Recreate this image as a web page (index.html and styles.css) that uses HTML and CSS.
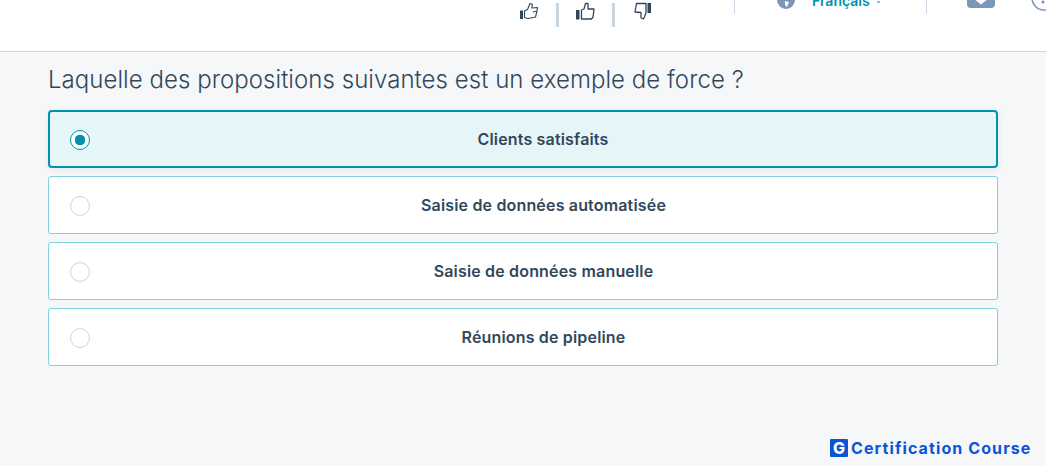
FILE: index.html
```html
<!DOCTYPE html>
<html lang="fr">
<head>
<meta charset="utf-8">
<title>Quiz</title>
<link rel="stylesheet" href="styles.css">
</head>
<body>
<header class="topbar">
  <svg class="thumb" viewBox="0 0 20 18" width="20" height="18"><rect x="1" y="8.5" width="3" height="8.5" fill="#33475b"/><path d="M5.5 9 L8.5 7.5 L11 1.5 L13.5 2.5 L12.8 6 L18.5 5.5 L18 9 L16.5 15 L9 16.5 L5.5 15.5 Z M14 10 L18 9" fill="none" stroke="#33475b" stroke-width="1.1" stroke-linejoin="round"/></svg>
  <span class="rate-sep"></span>
  <svg class="thumb" viewBox="0 0 20 18" width="20" height="18"><rect x="1" y="8" width="3.5" height="9.5" fill="#33475b"/><path d="M6.5 8 L9 7 L10.5 1.5 L13 1.5 L13 7 L19 7 L18 15 L16.5 17 L6.5 17 Z" fill="none" stroke="#33475b" stroke-width="1.3" stroke-linejoin="round"/></svg>
  <span class="rate-sep rate-sep-b"></span>
  <svg class="thumb thumb-down" viewBox="0 0 20 18" width="20" height="18"><rect x="14.5" y="1" width="3.5" height="10" fill="#33475b"/><path d="M13 1.5 L3.5 1.5 L2 10 L8 10.5 L8 16 L10.5 17 L13 11 Z" fill="none" stroke="#33475b" stroke-width="1.3" stroke-linejoin="round"/></svg>
  <span class="nav-sep nav-sep-a"></span>
  <svg class="globe" viewBox="0 0 18 18" width="18" height="18"><circle cx="9" cy="9" r="9" fill="#7c98b6"/><path d="M8 10 L12 11 L10 16 L8 14 Z M12 3 L16 6 L13 8 Z" fill="#fff"/></svg>
  <span class="lang">Français</span>
  <span class="caret"></span>
  <span class="nav-sep nav-sep-b"></span>
  <svg class="mail" viewBox="0 0 28 18" width="28" height="18"><rect width="28" height="18" rx="4" fill="#7c98b6"/><path d="M8.5 10 L14 14.5 L19.5 10 Z" fill="#fff"/></svg>
  <svg class="help" viewBox="0 0 26 26" width="26" height="26"><circle cx="13" cy="13" r="12" fill="none" stroke="#7c98b6" stroke-width="1.6"/><circle cx="12" cy="17" r="1.6" fill="#7c98b6"/></svg>
</header>
<main class="quiz">
  <h1 class="question">Laquelle des propositions suivantes est un exemple de force ?</h1>
  <ul class="options">
    <li class="option option-selected"><span class="radio radio-on"></span><span class="label">Clients satisfaits</span></li>
    <li class="option"><span class="radio"></span><span class="label">Saisie de données automatisée</span></li>
    <li class="option"><span class="radio"></span><span class="label">Saisie de données manuelle</span></li>
    <li class="option"><span class="radio"></span><span class="label">Réunions de pipeline</span></li>
  </ul>
</main>
<div class="brand">
  <span class="brand-mark">G</span>
  <span class="brand-text">Certification Course</span>
</div>
</body>
</html>
```
FILE: styles.css
```css
* { box-sizing: border-box; }
html, body { margin: 0; padding: 0; }
body {
  width: 1046px;
  height: 466px;
  overflow: hidden;
  position: relative;
  background: #f5f7f9;
  font-family: "Inter", "Liberation Sans", sans-serif;
  color: #33475b;
}
.topbar {
  display: flex;
  align-items: flex-start;
  height: 52px;
  padding-left: 519px;
  background: #fff;
  border-bottom: 1px solid #cbd6e2;
  overflow: hidden;
}
.thumb { flex: none; margin-top: 2px; }
.rate-sep {
  flex: none;
  width: 3px;
  height: 24px;
  margin: 3px 16px 0 17px;
  background: #cbd6e2;
}
.rate-sep-b { margin-right: 18px; }
.nav-sep {
  flex: none;
  width: 1px;
  height: 14px;
  background: #cbd6e2;
}
.nav-sep-a { margin-left: 81px; }
.nav-sep-b { margin-left: 46px; }
.globe { flex: none; margin: -9px 0 0 42px; }
.lang {
  flex: none;
  width: 60px;
  margin: -8px 0 0 17px;
  font-size: 14px;
  line-height: 17px;
  font-weight: 600;
  color: #0091ae;
}
.caret {
  flex: none;
  width: 3px;
  height: 2px;
  margin: 1px 0 0 5px;
  background: #7fc8d6;
}
.mail { flex: none; margin: -10px 0 0 40px; }
.help { flex: none; margin: -15px 0 0 36px; }
.quiz { padding: 0 48px; }
.question {
  margin: 12px 0 14px;
  font-size: 24px;
  line-height: 32px;
  font-weight: 300;
  letter-spacing: 0.05px;
  white-space: nowrap;
  color: #33475b;
}
.options {
  display: flex;
  flex-direction: column;
  gap: 8px;
  margin: 0;
  padding: 0;
  list-style: none;
}
.option {
  display: flex;
  align-items: center;
  height: 58px;
  padding-left: 21px;
  background: #fff;
  border: 1px solid #7fd1de;
  border-radius: 3px;
}
.option-selected {
  padding-left: 20px;
  background: #e5f5f8;
  border: 2px solid #0091ae;
  border-radius: 4px;
  box-shadow: 0 2px 6px rgba(45, 62, 80, 0.08);
}
.radio {
  flex: none;
  width: 20px;
  height: 20px;
  margin-top: 2px;
  border: 1px solid #cbd6e2;
  border-radius: 50%;
  background: #fff;
}
.radio-on {
  border-color: #0091ae;
  background: radial-gradient(circle, #0091ae 0 5px, #fff 5.5px);
}
.label {
  flex: 1;
  text-align: center;
  font-size: 16px;
  line-height: 20px;
  font-weight: 600;
  letter-spacing: 0.17px;
  color: #33475b;
}
.brand {
  position: absolute;
  left: 830px;
  top: 439px;
  display: flex;
  align-items: center;
  gap: 3px;
}
.brand-mark {
  display: flex;
  align-items: center;
  justify-content: center;
  width: 18px;
  height: 18px;
  border-radius: 1px;
  background: #0a54d6;
  color: #fff;
  font-size: 16px;
  font-weight: 800;
  line-height: 1;
}
.brand-text {
  font-size: 16px;
  line-height: 18px;
  font-weight: 700;
  letter-spacing: 1.1px;
  white-space: nowrap;
  color: #0a54d6;
}
```
